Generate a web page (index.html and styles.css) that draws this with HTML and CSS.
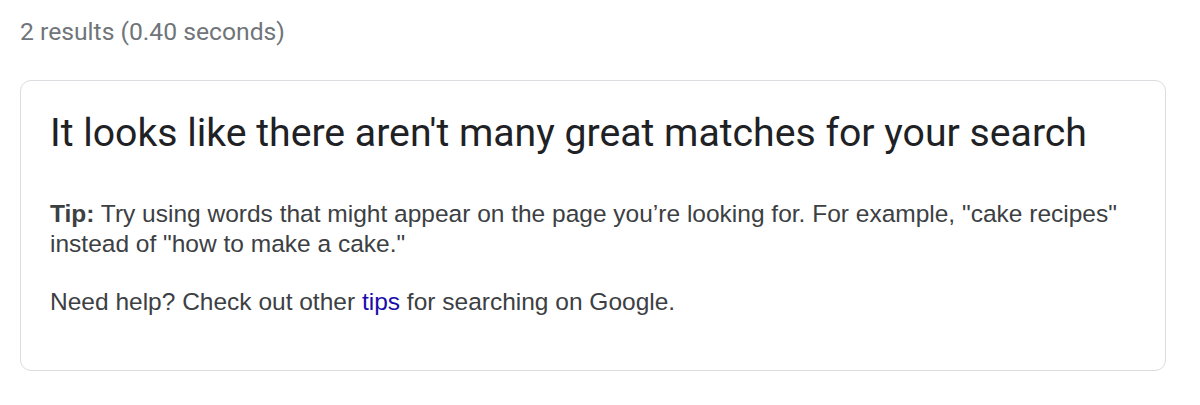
FILE: index.html
```html
<!DOCTYPE html>
<html lang="en">
<head>
<meta charset="utf-8">
<title>Search results</title>
<link rel="stylesheet" href="styles.css">
</head>
<body>
<main class="page">
  <div class="stats">2 results (0.40 seconds)</div>
  <section class="card">
    <h2 class="card-title">It looks like there aren't many great matches for your search</h2>
    <p class="tip"><b>Tip:</b> Try using words that might appear on the page you’re looking for. For example, "cake recipes" instead of "how to make a cake."</p>
    <p class="help">Need help? Check out other <a href="#" class="link">tips</a> for searching on Google.</p>
  </section>
</main>
</body>
</html>
```

FILE: styles.css
```css
html, body {
  margin: 0;
  padding: 0;
  background: #ffffff;
}

.page {
  padding: 16.5px 34px 0 20px;
}

.stats {
  font-family: Roboto, "Open Sans", sans-serif;
  font-size: 24.7px;
  line-height: 30px;
  color: #70757a;
}

.card {
  margin-top: 33.5px;
  border: 1px solid #dadce0;
  border-radius: 11px;
  padding: 28px 29px 52.5px 29px;
}

.card-title {
  margin: 0 0 42px 0;
  font-family: Roboto, "Open Sans", sans-serif;
  font-weight: 400;
  font-size: 39.2px;
  line-height: 48px;
  color: #202124;
}

.tip, .help {
  margin: 0;
  font-family: "Liberation Sans", Arial, sans-serif;
  font-size: 24.5px;
  line-height: 30px;
  color: #3c4043;
}

.tip {
  margin-bottom: 28px;
}

.link {
  color: #1a0dab;
  text-decoration: none;
}
```
